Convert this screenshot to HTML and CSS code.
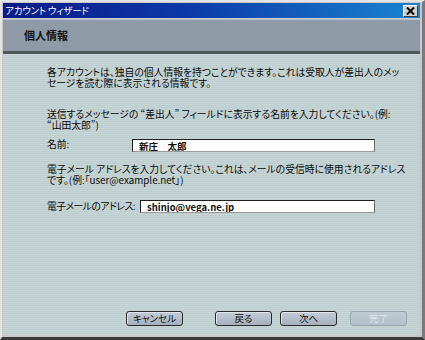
FILE: index.html
```html
<!DOCTYPE html>
<html lang="ja">
<head>
  <meta charset="UTF-8" />
  <title>アカウント ウィザード</title>
  <link rel="stylesheet" href="styles.css">
</head>
<body>
  <div class="window">
    <div class="titlebar">
      <span class="title">アカウント ウィザード</span>
      <button class="close-btn" aria-label="閉じる">
        <svg width="9" height="8" viewBox="0 0 9 8"><path d="M1 0.5 L8 7.5 M8 0.5 L1 7.5" stroke="#000" stroke-width="2"/></svg>
      </button>
    </div>
    <div class="header">個人情報</div>
    <div class="content">
      <p class="intro">各アカウントは、独自の個人情報を持つことができます。これは受取人が差出人のメッ<br>セージを読む際に表示される情報です。</p>
      <p class="hint">送信するメッセージの “差出人” フィールドに表示する名前を入力してください。(例:<br>“山田太郎”)</p>
      <div class="field name-field">
        <label>名前:</label>
        <input type="text" value="新庄　太郎" />
      </div>
      <p class="hint hint-mail">電子メール アドレスを入力してください。これは、メールの受信時に使用されるアドレス<br>です。(例:「user@example.net」)</p>
      <div class="field mail-field">
        <label>電子メールのアドレス:</label>
        <input type="text" value="shinjo@vega.ne.jp" />
      </div>
      <div class="button-row">
        <button class="wiz-btn cancel">キャンセル</button>
        <button class="wiz-btn">戻る</button>
        <button class="wiz-btn next">次へ</button>
        <button class="wiz-btn finish" disabled>完了</button>
      </div>
    </div>
  </div>
</body>
</html>
```

FILE: styles.css
```css
body {
  margin: 0;
  background: #c0c0c0;
  font-family: "Noto Sans CJK JP", "Noto Sans", sans-serif;
  font-feature-settings: "palt";
}
.window {
  width: 425px;
  height: 340px;
  box-sizing: border-box;
  display: flex;
  flex-direction: column;
  background: #c8c8c8;
  border-left: 2px solid #e4e4e4;
  border-top: 2px solid #e4e4e4;
  border-right: 3px solid #7a7a7a;
  border-bottom: 3px solid #3a3a3a;
  padding: 1px 2px 2px 1px;
}
.titlebar {
  height: 15px;
  display: flex;
  align-items: center;
  justify-content: space-between;
  padding: 0 2px 0 2px;
  background: linear-gradient(to right, #0a1a88 0%, #0c3aa8 45%, #1a84d2 100%);
}
.title {
  color: #fff;
  font-size: 9.5px;
  line-height: 15px;
  letter-spacing: -0.2px;
}
.close-btn {
  width: 15px;
  height: 12px;
  padding: 0;
  display: flex;
  align-items: center;
  justify-content: center;
  background: #d4d0c8;
  border: 1px solid;
  border-color: #fff #404040 #404040 #fff;
}
.header {
  height: 31px;
  margin-top: 1px;
  border-top: 1px solid #b9c3cc;
  background: #8e9ba7;
  padding-left: 21px;
  font-size: 11px;
  font-weight: bold;
  line-height: 30px;
  color: #111;
  border-bottom: 3px solid #4d5959;
}
.content {
  flex: 1;
  display: flex;
  flex-direction: column;
  padding: 13px 45px 9px 44px;
  background: repeating-linear-gradient(#c6d5d5 0 1px, #becece 1px 2px);
  font-size: 9.8px;
  line-height: 11px;
  color: #0a0a0a;
}
p {
  margin: 0;
  white-space: nowrap;
}
.hint {
  margin-top: 20px;
}
.hint-mail {
  margin-top: 12px;
}
.field {
  display: flex;
  align-items: center;
}
.field label {
  flex-shrink: 0;
  white-space: nowrap;
}
.name-field {
  margin-top: 8px;
}
.mail-field {
  margin-top: 14px;
}
.name-field label {
  width: 85px;
  align-self: flex-start;
}
.mail-field label {
  width: 93px;
  letter-spacing: -0.5px;
}
.field input {
  flex: 1;
  min-width: 0;
  height: 13px;
  box-sizing: border-box;
  border: 1px solid #1e1e1e;
  border-right-color: #6a6a6a;
  border-bottom-color: #9a9a9a;
  background: #fff;
  padding: 0 6px;
  font-family: "Noto Sans CJK JP", "Noto Sans", sans-serif;
  font-size: 9.5px;
  font-weight: bold;
  color: #111;
}
.button-row {
  margin-top: auto;
  display: flex;
  margin-left: 79px;
  margin-right: -32px;
}
.wiz-btn {
  width: 58px;
  height: 15px;
  padding: 0;
  border: 1px solid #2a2a2a;
  border-radius: 3px;
  background: linear-gradient(#c4ccd6, #a5b0bd);
  box-shadow: inset 1px 1px 0 #dfe5ec;
  font-family: "Noto Sans CJK JP", "Noto Sans", sans-serif;
  font-feature-settings: "palt";
  font-size: 9.5px;
  line-height: 13px;
  color: #111;
}
.cancel {
  margin-right: 32px;
}
.next {
  margin-left: 8px;
  margin-right: 13px;
}
.finish {
  border-color: #98a4ae;
  background: linear-gradient(#c0ccd4, #b3c0c9);
  box-shadow: none;
  color: #dde4ea;
}
```
